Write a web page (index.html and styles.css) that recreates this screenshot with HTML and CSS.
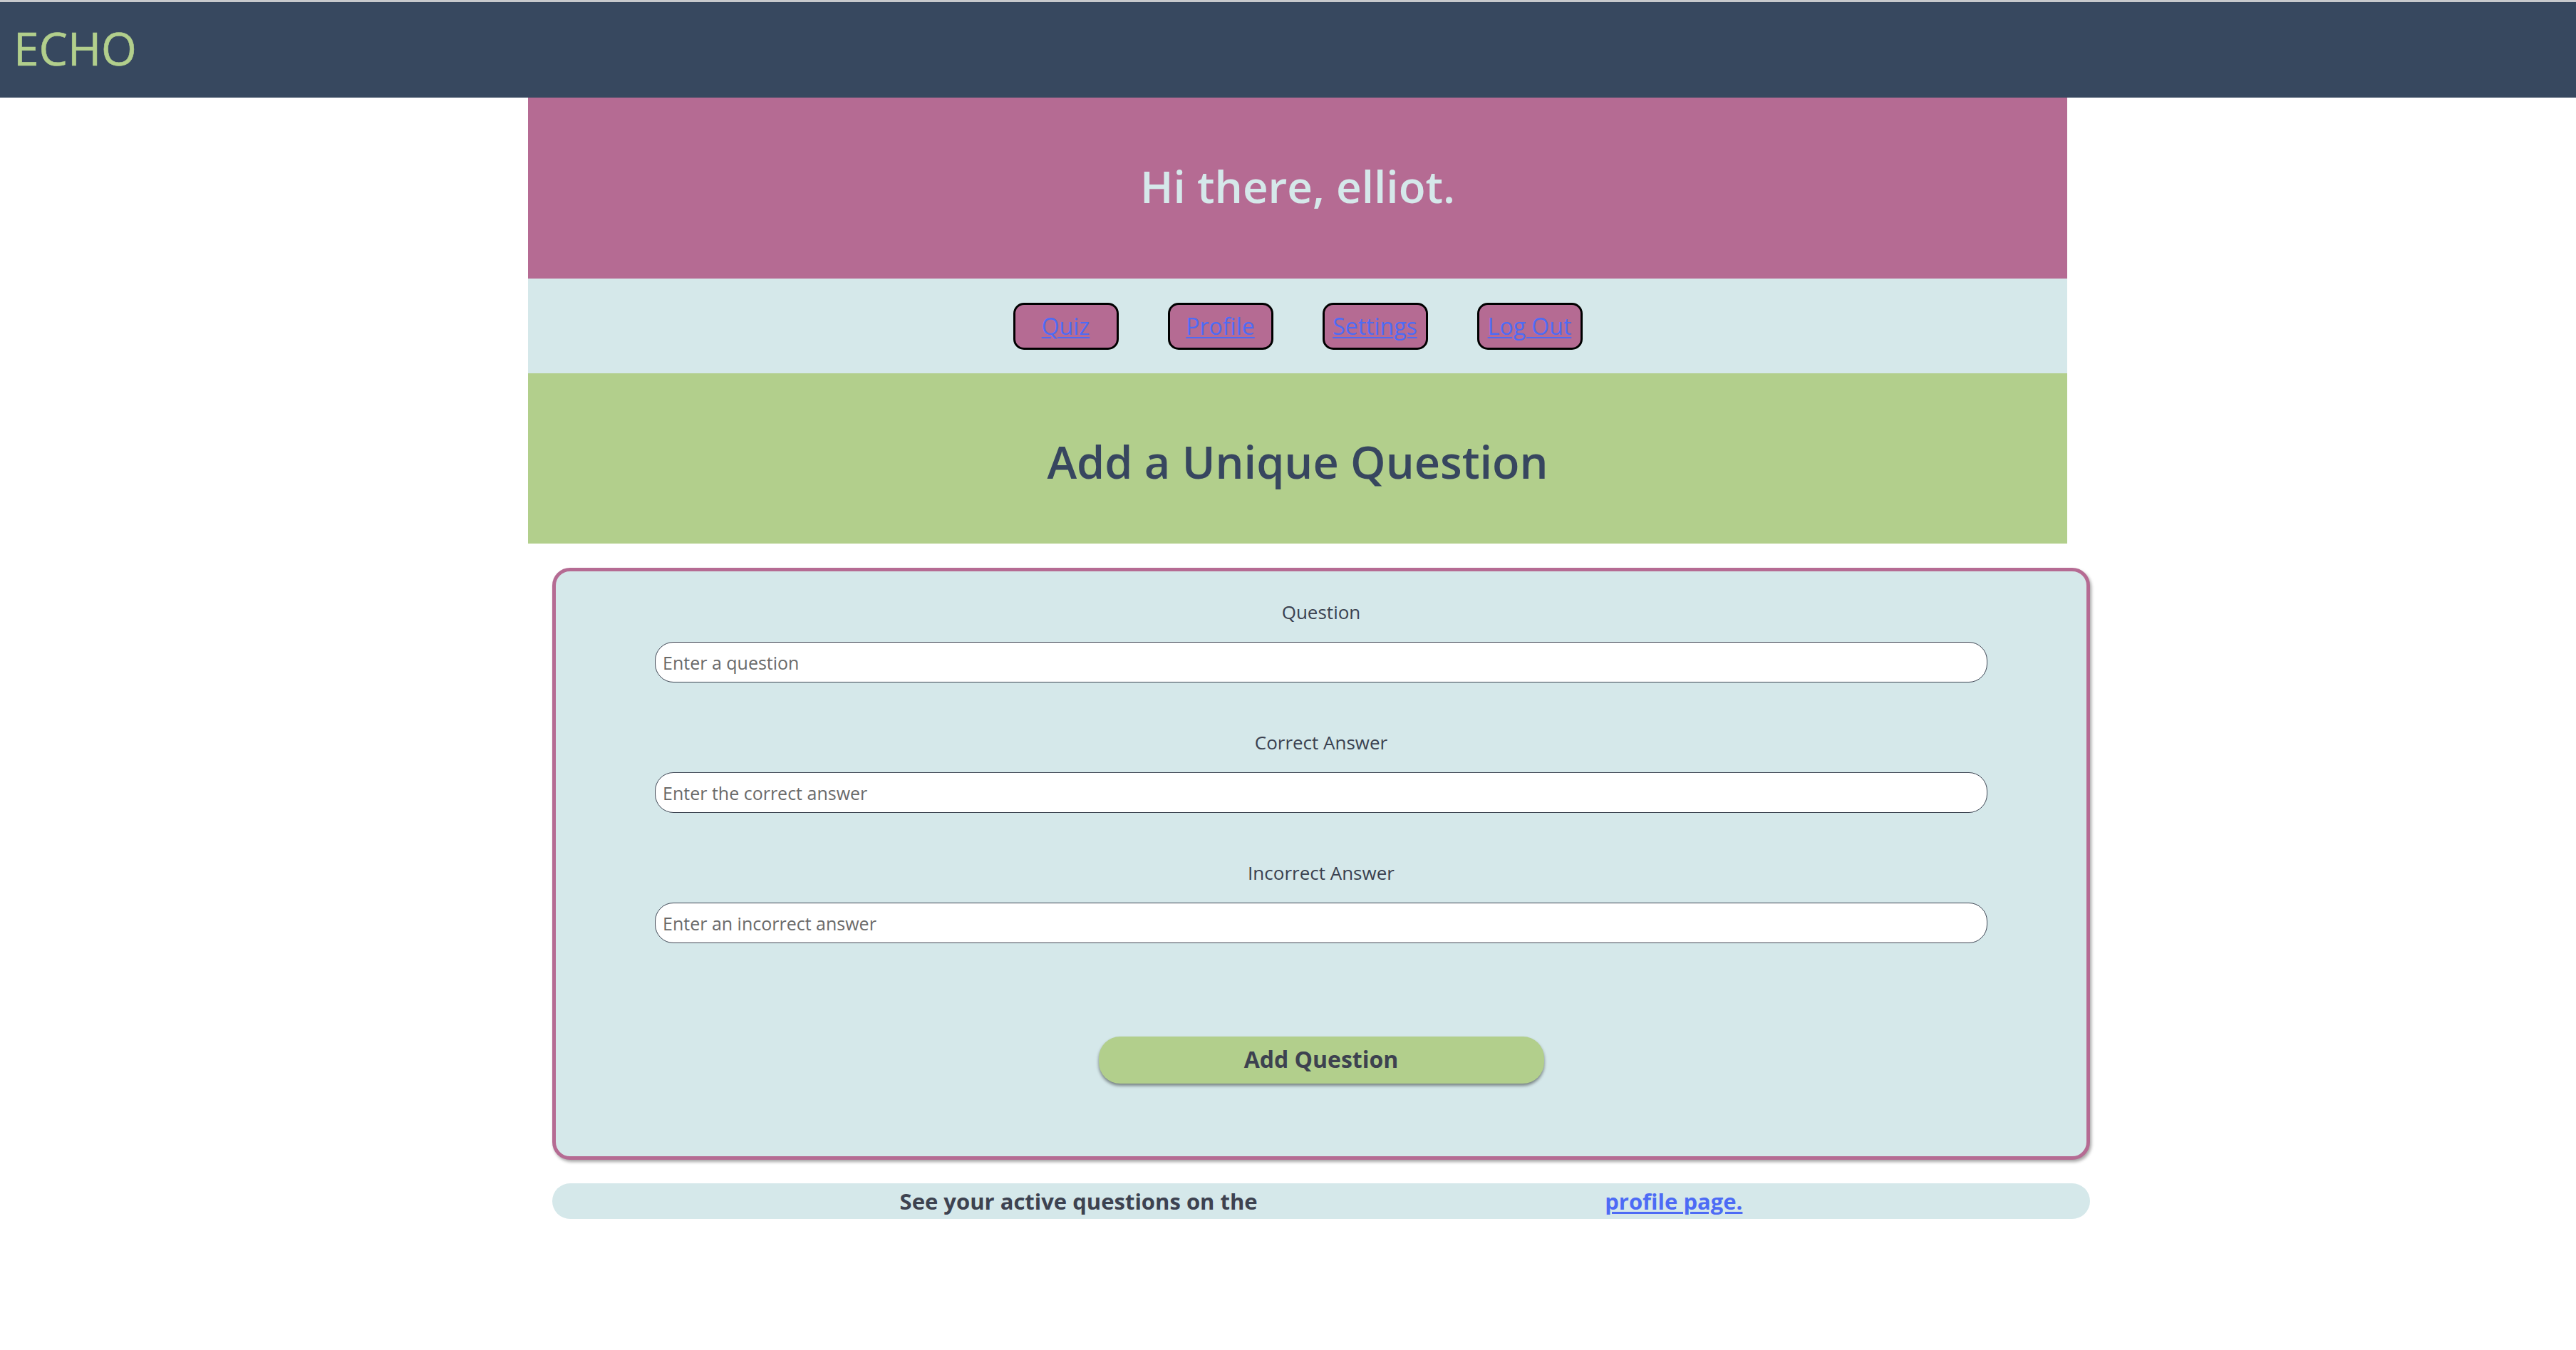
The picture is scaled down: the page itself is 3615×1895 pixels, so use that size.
FILE: index.html
```html
<!DOCTYPE html>
<html lang="en">
<head>
<meta charset="utf-8">
<title>ECHO - Add a Unique Question</title>
<link rel="stylesheet" href="styles.css">
</head>
<body>
<header class="topbar">
  <div class="brand">ECHO</div>
</header>
<main class="page">
  <section class="greeting">
    <h1 class="greeting-text">Hi there, elliot.</h1>
  </section>
  <nav class="nav">
    <div class="nav-btn"><a href="#">Quiz</a></div>
    <div class="nav-btn"><a href="#">Profile</a></div>
    <div class="nav-btn"><a href="#">Settings</a></div>
    <div class="nav-btn"><a href="#">Log Out</a></div>
  </nav>
  <section class="title-band">
    <h2 class="title">Add a Unique Question</h2>
  </section>
  <form class="card">
    <div class="field">
      <label class="field-label" for="q">Question</label>
      <input class="field-input" id="q" type="text" placeholder="Enter a question">
    </div>
    <div class="field">
      <label class="field-label" for="c">Correct Answer</label>
      <input class="field-input" id="c" type="text" placeholder="Enter the correct answer">
    </div>
    <div class="field">
      <label class="field-label" for="i">Incorrect Answer</label>
      <input class="field-input" id="i" type="text" placeholder="Enter an incorrect answer">
    </div>
    <button class="submit" type="button">Add Question</button>
  </form>
  <div class="footer-note">
    <span class="note-text">See your active questions on the</span>
    <a class="note-link" href="#">profile page.</a>
  </div>
</main>
</body>
</html>
```
FILE: styles.css
```css
* { box-sizing: border-box; }

html, body {
  margin: 0;
  padding: 0;
  background: #ffffff;
  font-family: "Open Sans", "Noto Sans", sans-serif;
}

.topbar {
  border-top: 3px solid #c7c9cc;
  height: 137px;
  background: #37485f;
  display: flex;
  align-items: center;
  padding-left: 19px;
}

.brand {
  color: #b2cf8c;
  font-size: 64px;
  line-height: 1;
  padding-bottom: 4px;
  -webkit-text-stroke: 0.6px #b2cf8c;
}

.page {
  width: 2160px;
  margin-left: 741px;
}

.greeting {
  background: #b56b93;
  height: 254px;
  display: flex;
  align-items: center;
  justify-content: center;
}

.greeting-text {
  margin: 0;
  color: #d5e8ea;
  font-size: 62px;
  font-weight: 600;
  line-height: 1;
  padding-bottom: 6px;
}

.nav {
  background: #d5e8ea;
  height: 133px;
  display: flex;
  align-items: center;
  justify-content: center;
  gap: 69px;
}

.nav-btn {
  width: 148px;
  height: 66px;
  background: #b56b93;
  border: 3px solid #000000;
  border-radius: 15px;
  display: flex;
  align-items: center;
  justify-content: center;
}

.nav-btn a {
  color: #4d6bf5;
  font-size: 32px;
  line-height: 1;
  text-decoration: underline;
  text-decoration-thickness: 2px;
  text-underline-offset: 3px;
}

.title-band {
  background: #b2cf8c;
  height: 239px;
  display: flex;
  align-items: center;
  justify-content: center;
}

.title {
  margin: 0;
  color: #37465f;
  font-size: 63px;
  font-weight: 600;
  line-height: 1;
  padding-top: 8px;
}

.card {
  margin: 34px 0 0 34px;
  width: 2158px;
  background: #d5e8ea;
  border: 5px solid #b56b93;
  border-radius: 25px;
  box-shadow: 2px 3px 4px rgba(0, 0, 0, 0.35);
  padding: 38px 0 102px;
  display: flex;
  flex-direction: column;
  align-items: center;
  gap: 65px;
}

.field {
  width: 1870px;
  display: flex;
  flex-direction: column;
  align-items: center;
  gap: 23px;
}

.field-label {
  color: #3a4150;
  font-size: 26px;
  line-height: 38px;
  height: 38px;
}

.field-input {
  width: 100%;
  height: 57px;
  border: 1.5px solid #3d4452;
  border-radius: 26px;
  background: #ffffff;
  padding: 0 10px;
  font-family: "Open Sans", "Noto Sans", sans-serif;
  font-size: 25px;
  color: #333333;
  outline: none;
}

.field-input::placeholder {
  color: #6a6a6a;
  opacity: 1;
}

.submit {
  margin-top: 66px;
  width: 625px;
  height: 66px;
  border: none;
  border-radius: 30px;
  background: #b2cf8c;
  box-shadow: 0 3px 4px rgba(0, 0, 0, 0.45);
  color: #3d4250;
  font-family: "Open Sans", "Noto Sans", sans-serif;
  font-size: 32px;
  font-weight: 700;
  line-height: 1;
  padding: 0 0 2px;
}

.footer-note {
  margin: 33px 0 0 34px;
  width: 2158px;
  height: 50px;
  background: #d5e8ea;
  border-radius: 25px;
  display: flex;
  align-items: center;
  justify-content: space-evenly;
  font-size: 31px;
  font-weight: 700;
}

.note-text {
  color: #3d4250;
}

.note-link {
  color: #4d6bf5;
  text-decoration: underline;
  text-decoration-thickness: 3px;
  text-underline-offset: 3px;
}
```
